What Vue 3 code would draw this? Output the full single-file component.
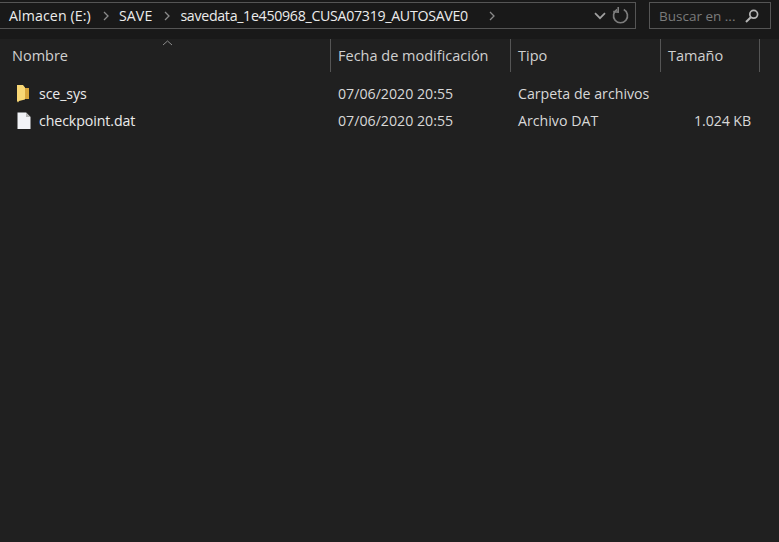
<template>
  <div class="window">
    <div class="topbar">
      <div class="address">
        <div class="crumbs">
          <span v-for="c in crumbs" :key="c.label" class="crumb" :class="{ last: c.tight }">
            <span :class="c.tight ? 'tight' : 'loose'">{{ c.label }}</span>
            <svg class="chev" width="6" height="10" viewBox="0 0 6 10"><path d="M1 1l4 4-4 4" fill="none" stroke="#8a8a8a" stroke-width="1.3"/></svg>
          </span>
        </div>
        <svg class="down" width="12" height="8" viewBox="0 0 12 8"><path d="M1 1.2l5 5 5-5" fill="none" stroke="#a0a0a0" stroke-width="1.7"/></svg>
        <svg class="refresh" width="17" height="19" viewBox="0 0 17 19"><path d="M5.2 3.6A7 7 0 1 0 11.8 3.6" fill="none" stroke="#7d7d7d" stroke-width="1.7"/><path d="M6.2 1L6.2 6.2L1.2 5.6" fill="none" stroke="#7d7d7d" stroke-width="1.6"/></svg>
      </div>
      <div class="search">
        <span>Buscar en ...</span>
        <svg width="14" height="14" viewBox="0 0 14 14"><circle cx="8.7" cy="5.3" r="3.9" fill="none" stroke="#b5b5b5" stroke-width="1.7"/><path d="M5.8 8.2L1 13" stroke="#b5b5b5" stroke-width="2"/></svg>
      </div>
    </div>
    <div class="head">
      <svg class="sort" width="11" height="6" viewBox="0 0 11 6"><path d="M1 5l4.500-4 4.500 4" fill="none" stroke="#8c8c8c"/></svg>
      <div v-for="h in headers" :key="h" class="hcell">{{ h }}</div>
    </div>
    <div class="rows">
      <div v-for="r in rows" :key="r.name" class="row">
        <div class="name">
          <svg v-if="r.folder" width="14" height="18" viewBox="0 0 14 18"><path d="M7 3h5v11H7z" fill="#d9a63c"/><path d="M0 0h6l2 2.500v12l-6 1.500-1 1.500-1-1.500z" fill="#f8d775"/></svg>
          <svg v-else width="14" height="18" viewBox="0 0 14 18"><path d="M0.500 .5h8.500l4.500 4.500v12H0.500z" fill="#f2f3f7"/><path d="M9 .5l4.500 4.500H9z" fill="#b5b5b5"/></svg>
          <span>{{ r.name }}</span>
        </div>
        <div>{{ r.date }}</div>
        <div>{{ r.type }}</div>
        <div class="size">{{ r.size }}</div>
      </div>
    </div>
  </div>
</template>

<script setup>
const crumbs = [
  { label: 'Almacen (E:)', tight: false },
  { label: 'SAVE', tight: false },
  { label: 'savedata_1e450968_CUSA07319_AUTOSAVE0', tight: true }
]
const headers = ['Nombre', 'Fecha de modificación', 'Tipo', 'Tamaño']
const rows = [
  { name: 'sce_sys', date: '07/06/2020 20:55', type: 'Carpeta de archivos', size: '', folder: true },
  { name: 'checkpoint.dat', date: '07/06/2020 20:55', type: 'Archivo DAT', size: '1.024 KB', folder: false }
]
</script>

<style>
html, body { margin: 0; background: #202020; }
</style>

<style scoped>
.window {
  width: 779px;
  height: 542px;
  overflow: hidden;
  background: #202020;
  color: #ececec;
  font: 14.2px/18px "Open Sans", sans-serif;
}
.topbar {
  height: 39px;
  box-sizing: border-box;
  padding: 2px 8px 10px 0;
  display: flex;
  gap: 13px;
  background: #191919;
}
.address {
  flex: 1;
  margin-left: -1px;
  display: flex;
  align-items: center;
  border: 1px solid #555;
  border-left: 0;
  padding: 0 6px 0 10px;
}
.crumbs { flex: 1; display: flex; gap: 10px; }
.crumb { display: flex; align-items: center; gap: 12px; }
.crumb.last { gap: 21px; }
.tight { letter-spacing: -0.3px; }
.loose { letter-spacing: 0.1px; }
.chev { flex: none; }
.down { margin-right: 6px; }
.search {
  width: 122px;
  box-sizing: border-box;
  display: flex;
  align-items: center;
  justify-content: space-between;
  border: 1px solid #555;
  padding: 0 11px 0 9px;
  color: #7b7b7b;
  font-size: 13.5px;
}
.head {
  position: relative;
  height: 33px;
  display: grid;
  grid-template-columns: 330px 180px 150px 100px;
  font-size: 14.5px;
}
.sort { position: absolute; left: 162px; top: 1px; }
.hcell {
  display: flex;
  align-items: center;
  padding-left: 12px;
  box-sizing: border-box;
  color: #d0d0d0;
}
.hcell + .hcell { padding-left: 7px; border-left: 1px solid #555; }
.hcell:last-child { border-right: 1px solid #555; }
.rows { padding-top: 8px; }
.row {
  height: 27px;
  display: grid;
  grid-template-columns: 331px 180px 150px 90px;
  align-items: center;
  color: #d8d8d8;
}
.row > div + div { padding-left: 7px; }
.name { display: flex; align-items: center; gap: 8px; padding-left: 17px; color: #ececec; letter-spacing: -0.1px; }
.row > .size { padding-left: 0; text-align: right; letter-spacing: -0.1px; }
</style>
